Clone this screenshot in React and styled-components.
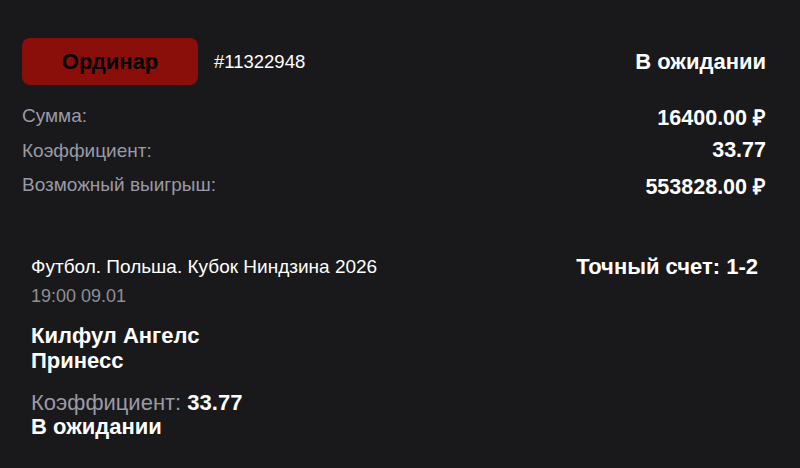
import React from 'react'
import styled, { createGlobalStyle } from 'styled-components'

const GlobalStyle = createGlobalStyle`
    html, body {
        margin: 0;
        padding: 0;
        background: #19191b;
    }
    body {
        font-family: "Liberation Sans", Arial, sans-serif;
        color: #fff;
    }
`

const Page = styled.div`
    width: 800px;
    height: 468px;
    box-sizing: border-box;
    padding: 38px 34px 0 22px;
    background: #19191b;
`

const Header = styled.div`
    display: flex;
    align-items: center;
`

const TypeBadge = styled.div`
    display: flex;
    align-items: center;
    justify-content: center;
    width: 176px;
    height: 47px;
    border-radius: 8px;
    background: #8a0e0a;
    color: #000;
    font-size: 22px;
    font-weight: 700;
`

const BetId = styled.span`
    margin-left: 16px;
    font-size: 18.5px;
    color: #fff;
`

const Status = styled.span`
    margin-left: auto;
    font-size: 22px;
    font-weight: 700;
`

const Summary = styled.div`
    display: flex;
    flex-direction: column;
    gap: 10.5px;
    margin-top: 19px;
`

const Row = styled.div`
    display: flex;
    justify-content: space-between;
    align-items: center;
    height: 24px;
`

const Label = styled.span`
    font-size: 19px;
    color: #9a9aa6;
`

const Value = styled.span`
    font-size: 21.5px;
    font-weight: 700;
`

const Event = styled.div`
    display: flex;
    flex-direction: column;
    margin: 59px 8px 0 9px;
`

const EventTop = styled.div`
    display: flex;
    justify-content: space-between;
    align-items: center;
    height: 22px;
`

const League = styled.div`
    font-size: 19px;
    color: #fff;
`

const Market = styled.div`
    font-size: 22px;
    font-weight: 700;
`

const Time = styled.div`
    margin-top: 8px;
    font-size: 18px;
    line-height: 20px;
    color: #8e8e98;
`

const Team = styled.div`
    font-size: 22px;
    font-weight: 700;
    line-height: 25px;
    margin-top: ${p => p.$first ? '16.5px' : '0'};
`

const Odds = styled.div`
    margin-top: 17px;
    font-size: 22px;
    line-height: 25px;
    color: #9a9aa6;

    b {
        color: #fff;
    }
`

const EventStatus = styled.div`
    font-size: 22px;
    font-weight: 700;
    line-height: 24px;
`

export default function App() {
    return (
        <>
            <GlobalStyle />
            <Page>
                <Header>
                    <TypeBadge>Ординар</TypeBadge>
                    <BetId>#11322948</BetId>
                    <Status>В ожидании</Status>
                </Header>

                <Summary>
                    <Row>
                        <Label>Сумма:</Label>
                        <Value>16400.00 ₽</Value>
                    </Row>
                    <Row>
                        <Label>Коэффициент:</Label>
                        <Value>33.77</Value>
                    </Row>
                    <Row>
                        <Label>Возможный выигрыш:</Label>
                        <Value>553828.00 ₽</Value>
                    </Row>
                </Summary>

                <Event>
                    <EventTop>
                        <League>Футбол. Польша. Кубок Ниндзина 2026</League>
                        <Market>Точный счет: 1-2</Market>
                    </EventTop>
                    <Time>19:00 09.01</Time>
                    <Team $first>Килфул Ангелс</Team>
                    <Team>Принесс</Team>
                    <Odds>Коэффициент: <b>33.77</b></Odds>
                    <EventStatus>В ожидании</EventStatus>
                </Event>
            </Page>
        </>
    )
}
